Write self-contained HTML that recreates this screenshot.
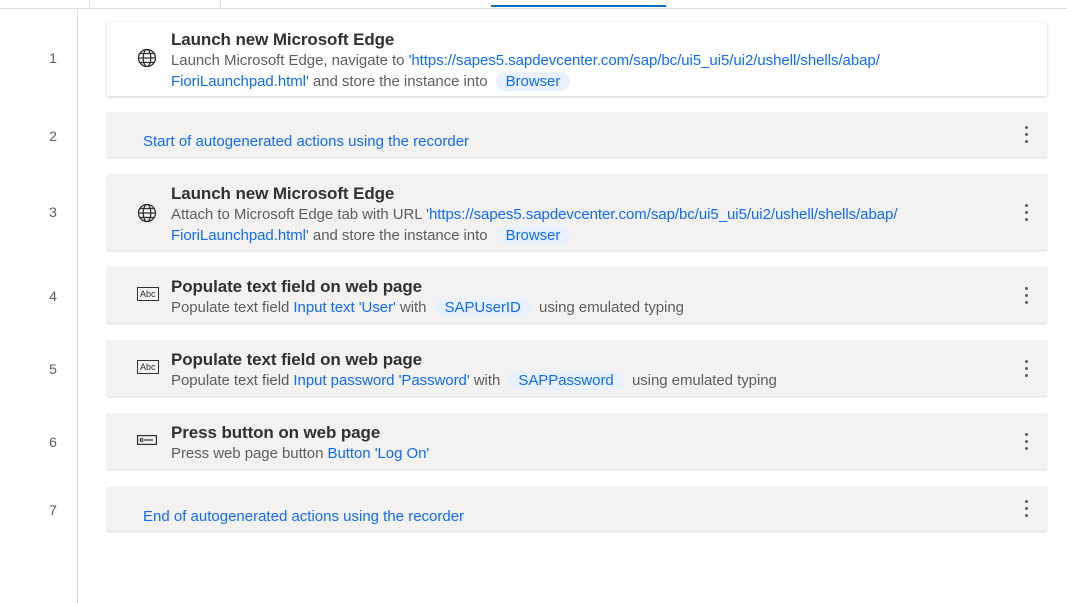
<!DOCTYPE html>
<html><head><style>
body{margin:0;width:1067px;height:603px;background:#fff;font-family:"Liberation Sans",sans-serif;position:relative;overflow:hidden}
.top{position:absolute;left:0;top:0;width:1067px;height:8px;border-bottom:1px solid #e1dfdd}
.tsep{position:absolute;top:0;width:1px;height:8px;background:#e1dfdd}
.vl{position:absolute;left:77px;top:9px;width:1px;height:594px;background:#e1dfdd}
.num{position:absolute;left:40px;width:26px;text-align:center;font-size:14px;color:#605e5c}
.card{position:absolute;left:107px;width:940px;background:#f3f2f1;box-shadow:0 1px 2px rgba(0,0,0,.15)}
.card.w{background:#fff;box-shadow:0 1px 3px rgba(0,0,0,.18)}
.t{position:absolute;left:64px;font-size:17px;font-weight:bold;color:#323130;letter-spacing:-0.1px}
.d{position:absolute;left:64px;font-size:15px;color:#605e5c;line-height:21px;white-space:nowrap;letter-spacing:-0.05px}
.l{color:#0f6cfd}
.p{background:#e8f1fd;color:#0f6cfd;border-radius:10px;padding:1px 10px;margin-left:4px}
.ic{position:absolute;left:30px}
.dots{position:absolute;right:18px;width:4px}
.dots i{display:block;width:3px;height:3px;border-radius:50%;background:#605e5c;margin-bottom:4px}
.s{position:absolute;left:36px;font-size:15px;color:#0f6cfd}
.abc{border:1px solid #323130;font-size:9px;padding:0 2px;line-height:12px;color:#323130}
</style></head><body>
<div class="top"></div>
<div class="tsep" style="left:89px"></div><div class="tsep" style="left:220px"></div><div class="tsep" style="left:666px"></div>
<div style="position:absolute;left:491px;top:5px;width:175px;height:2px;background:#0f6cbd"></div>
<div class="vl"></div>
<div class="num" style="top:50px">1</div>
<div class="num" style="top:128px">2</div>
<div class="num" style="top:204px">3</div>
<div class="num" style="top:288px">4</div>
<div class="num" style="top:361px">5</div>
<div class="num" style="top:434px">6</div>
<div class="num" style="top:502px">7</div>

<div class="card w" style="top:22px;height:74px">
<svg class="ic" style="top:26px" width="20" height="20" viewBox="0 0 20 20" fill="none" stroke="#323130" stroke-width="1.3"><circle cx="10" cy="10" r="8.5"/><ellipse cx="10" cy="10" rx="3.8" ry="8.5"/><line x1="1.5" y1="10" x2="18.5" y2="10"/><line x1="3" y1="5.5" x2="17" y2="5.5"/><line x1="3" y1="14.5" x2="17" y2="14.5"/></svg>
<div class="t" style="top:8px">Launch new Microsoft Edge</div>
<div class="d" style="top:28px">Launch Microsoft Edge, navigate to <span class="l">'https://sapes5.sapdevcenter.com/sap/bc/ui5_ui5/ui2/ushell/shells/abap/</span><br><span class="l">FioriLaunchpad.html'</span> and store the instance into <span class="p">Browser</span></div>
</div>

<div class="card" style="top:112px;height:45px">
<div class="s" style="top:21px">Start of autogenerated actions using the recorder</div>
<div class="dots" style="top:14px"><i></i><i></i><i></i></div>
</div>

<div class="card" style="top:174px;height:76px">
<svg class="ic" style="top:29px" width="20" height="20" viewBox="0 0 20 20" fill="none" stroke="#323130" stroke-width="1.3"><circle cx="10" cy="10" r="8.5"/><ellipse cx="10" cy="10" rx="3.8" ry="8.5"/><line x1="1.5" y1="10" x2="18.5" y2="10"/><line x1="3" y1="5.5" x2="17" y2="5.5"/><line x1="3" y1="14.5" x2="17" y2="14.5"/></svg>
<div class="t" style="top:10px">Launch new Microsoft Edge</div>
<div class="d" style="top:30px">Attach to Microsoft Edge tab with URL <span class="l">'https://sapes5.sapdevcenter.com/sap/bc/ui5_ui5/ui2/ushell/shells/abap/</span><br><span class="l">FioriLaunchpad.html'</span> and store the instance into <span class="p">Browser</span></div>
<div class="dots" style="top:30px"><i></i><i></i><i></i></div>
</div>

<div class="card" style="top:267px;height:56px">
<div class="ic abc" style="top:20px">Abc</div>
<div class="t" style="top:10px">Populate text field on web page</div>
<div class="d" style="top:30px">Populate text field <span class="l">Input text 'User'</span> with <span class="p">SAPUserID</span> &nbsp;using emulated typing</div>
<div class="dots" style="top:20px"><i></i><i></i><i></i></div>
</div>

<div class="card" style="top:340px;height:56px">
<div class="ic abc" style="top:20px">Abc</div>
<div class="t" style="top:10px">Populate text field on web page</div>
<div class="d" style="top:30px">Populate text field <span class="l">Input password 'Password'</span> with <span class="p">SAPPassword</span> &nbsp;using emulated typing</div>
<div class="dots" style="top:20px"><i></i><i></i><i></i></div>
</div>

<div class="card" style="top:413px;height:56px">
<svg class="ic" style="top:22px" width="20" height="10" viewBox="0 0 20 10" fill="none" stroke="#323130" stroke-width="1.2"><rect x="0.6" y="0.6" width="18.8" height="8.8"/><circle cx="4.5" cy="5" r="1.3"/><line x1="7" y1="5" x2="16" y2="5"/></svg>
<div class="t" style="top:10px">Press button on web page</div>
<div class="d" style="top:30px">Press web page button <span class="l">Button 'Log On'</span></div>
<div class="dots" style="top:20px"><i></i><i></i><i></i></div>
</div>

<div class="card" style="top:487px;height:44px">
<div class="s" style="top:21px">End of autogenerated actions using the recorder</div>
<div class="dots" style="top:13px"><i></i><i></i><i></i></div>
</div>
</body></html>
